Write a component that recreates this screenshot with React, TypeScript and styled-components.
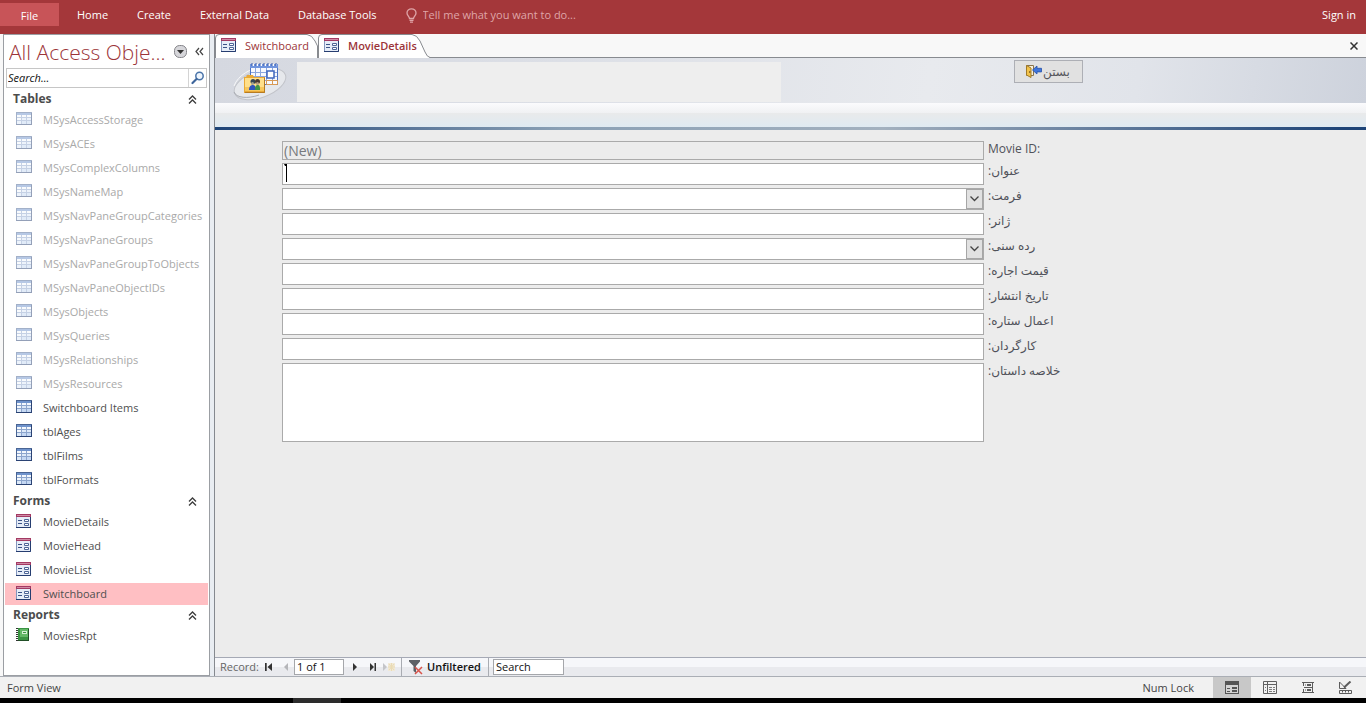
import React from 'react';
import styled, { createGlobalStyle } from 'styled-components';

const GlobalStyle = createGlobalStyle`
  * { box-sizing: border-box; }
  html, body, #root { height: 100%; }
  body {
    margin: 0;
    background: #000;
    color: #444;
    font-family: "Open Sans", "Noto Sans", "DejaVu Sans", sans-serif;
    font-size: 11px;
    line-height: 16px;
  }
  button, input, select, textarea { font: inherit; color: inherit; margin: 0; border-radius: 0; }
  button { cursor: default; }
  h1, h2, ul { margin: 0; padding: 0; font: inherit; }
  ul { list-style: none; }
`;

const Window = styled.div`
  display: flex;
  flex-direction: column;
  min-height: 100vh;
  background: #f8f8f8;
`;

/* ---- ribbon ---- */
const Ribbon = styled.header`
  display: flex;
  align-items: flex-start;
  height: 34px;
  padding: 3px 10px 0 0;
  background: #a4373a;
  color: #fff;
`;
const FileTab = styled.button`
  width: 59px;
  height: 23px;
  padding: 2px 0 0;
  border: 0;
  background: #c85458;
`;
const RibbonTabs = styled.nav`
  display: flex;
  gap: 29px;
  padding: 0 29px 0 18px;
`;
const RibbonTab = styled.button`
  height: 24px;
  padding: 0;
  border: 0;
  background: none;
  white-space: nowrap;
`;
const TellMe = styled.label`
  display: flex;
  flex: 1;
  align-items: center;
  gap: 6px;
  height: 24px;
  color: #dfa5a8;
`;
const TellMeInput = styled.input`
  width: 240px;
  padding: 0;
  border: 0;
  outline: 0;
  background: none;
  &::placeholder { color: #dfa5a8; opacity: 1; }
`;

/* ---- work area ---- */
const Workspace = styled.div`
  display: flex;
  flex: 1;
  border-bottom: 1px solid #aaaeb5;
`;

/* ---- navigation pane ---- */
const NavPane = styled.aside`
  width: 207px;
  margin-left: 3px;
  border: 1px solid #9b9ea3;
  background: #fff;
`;
const PaneHeader = styled.div`
  display: flex;
  align-items: center;
  gap: 8px;
  height: 33px;
  padding: 0 5px 0 5px;
`;
const PaneTitle = styled.h1`
  flex: 1;
  overflow: hidden;
  color: #9c3539;
  font-size: 21px;
  font-weight: 300;
  line-height: 32px;
  white-space: nowrap;
`;
const BareButton = styled.button`
  display: flex;
  align-items: center;
  justify-content: center;
  padding: 0;
  border: 0;
  background: none;
`;
const PaneSearch = styled.div`
  display: flex;
  height: 20px;
  margin: 0 2px 2px;
  border: 1px solid #c6c6c6;
`;
const PaneSearchInput = styled.input`
  flex: 1;
  min-width: 0;
  padding: 0 1px;
  border: 0;
  border-right: 1px solid #d4d4d4;
  outline: 0;
  &::placeholder { color: #111; font-style: italic; opacity: 1; }
`;
const SearchButton = styled(BareButton)` width: 17px; `;
const GroupHeader = styled.button`
  display: flex;
  align-items: center;
  justify-content: space-between;
  width: 100%;
  height: 18px;
  padding: 0 12px 0 9px;
  border: 0;
  background: none;
  color: #4c4c4c;
  font-size: 12px;
  font-weight: 700;
`;
const NavList = styled.ul`
  display: flex;
  flex-direction: column;
  gap: 2px;
  padding: 1px;
`;
const NavItem = styled.li<{ $dim?: boolean; $selected?: boolean }>`
  display: flex;
  align-items: center;
  gap: 11px;
  height: 22px;
  padding-left: 11px;
  color: ${p => (p.$dim ? '#a9a9a9' : '#4f4f4f')};
  background: ${p => (p.$selected ? '#ffbfc3' : 'none')};
  white-space: nowrap;
  svg { opacity: ${p => (p.$dim ? 0.5 : 1)}; }
`;
const Splitter = styled.div`
  width: 5px;
  border-right: 1px solid #85898f;
  background: #e9edf2;
`;

/* ---- document area ---- */
const Documents = styled.main`
  display: flex;
  flex: 1;
  flex-direction: column;
  min-width: 0;
  background: #ececec;
`;
const TabStrip = styled.div`
  display: flex;
  align-items: stretch;
  height: 24px;
  border-bottom: 1px solid #888b90;
  background: #f8f8f8;
`;
const DocTab = styled.button<{ $active?: boolean }>`
  position: relative;
  display: flex;
  align-items: center;
  gap: 8px;
  width: ${p => (p.$active ? 112 : 103)}px;
  height: ${p => (p.$active ? 24 : 23)}px;
  padding: 0 0 0 6px;
  border: 0;
  background: none;
  color: #9c3539;
  font-weight: ${p => (p.$active ? 600 : 400)};
  white-space: nowrap;
  > * { position: relative; }
`;
const TabShape = styled.svg`
  && { position: absolute; }
  left: 0;
  top: 0;
`;
const CloseDocument = styled(BareButton)`
  width: 24px;
  margin-left: auto;
`;

const FormHeader = styled.header`
  display: flex;
  height: 45px;
  padding: 1px 0 1px 16px;
  background: linear-gradient(100deg, #d5d8e0 0%, #dcdfe6 30%, #e8eaee 62%, #e1e4ea 80%, #cdd2dc 100%);
`;
const TitleBox = styled.div`
  flex: 0 1 484px;
  margin: 3px 0 0 10px;
  background: #eee;
`;
const CloseForm = styled.button`
  display: flex;
  align-items: center;
  gap: 1px;
  width: 69px;
  height: 23px;
  margin: 1px 0 0 233px;
  padding: 0 0 0 10px;
  border: 1px solid #adafb5;
  background: #e1e1e1;
  color: #54565c;
  font-size: 12px;
`;
const HeaderBand = styled.div`
  height: 24px;
  background: linear-gradient(#fbfbfd 0, #f0f1f3 10px, #e9eaeb 10px, #dfeaf2 24px);
`;
const HeaderRule = styled.div`
  height: 3px;
  background: linear-gradient(90deg, #1d4478, #8aa0b5 30%, #a3b1bf 58%, #1d4478 98%);
`;

const FormBody = styled.form`
  display: flex;
  flex: 1;
  flex-direction: column;
  gap: 3px;
  padding: 11px 0 12px 67px;
`;
const FieldRow = styled.div`
  display: grid;
  grid-template-columns: minmax(200px, 702px) minmax(120px, 1fr);
  column-gap: 4px;
`;
const FieldLabel = styled.label`
  justify-self: start;
  color: #50525a;
  font-size: 12px;
  line-height: 16px;
`;
const Field = styled.input`
  width: 100%;
  height: 22px;
  padding: 0 2px;
  border: 1px solid #aaa;
  outline: 0;
  background: #fff;
`;
const IdField = styled(Field)`
  height: 19px;
  padding: 0 1px;
  background: #ececec;
  color: #77797d;
  font-size: 14px;
`;
const Memo = styled.textarea`
  display: block;
  width: 100%;
  height: 79px;
  border: 1px solid #aaa;
  outline: 0;
  resize: none;
`;
const FieldCell = styled.div` position: relative; `;
const Caret = styled.svg`
  position: absolute;
  left: 2px;
  top: 1px;
`;
const Drop = styled.select`
  width: 100%;
  height: 22px;
  border: 1px solid #aaa;
  outline: 0;
  background: #fff;
  appearance: none;
`;
const DropArrow = styled.span`
  position: absolute;
  top: 1px;
  right: 1px;
  display: flex;
  align-items: center;
  justify-content: center;
  width: 17px;
  height: 20px;
  border: 1px solid #a6a6a6;
  background: #e1e1e1;
  pointer-events: none;
`;

const RecordBar = styled.footer`
  display: flex;
  align-items: center;
  height: 19px;
  padding-left: 5px;
  border-top: 1px solid #a5a9b5;
  background: linear-gradient(#f6f7fa 0 50%, #e9eaee 50%);
  color: #111;
`;
const RecordLabel = styled.label`
  width: 40px;
  color: #666;
`;
const RecordButton = styled(BareButton)<{ $width: number }>`
  width: ${p => p.$width}px;
  height: 16px;
`;
const RecordInput = styled.input<{ $width: number }>`
  width: ${p => p.$width}px;
  height: 16px;
  padding: 0 2px;
  border: 1px solid #a5a7ab;
  outline: 0;
  background: #fff;
`;
const FilterButton = styled(BareButton)`
  gap: 3px;
  width: 88px;
  height: 18px;
  margin: 0 4px 0 3px;
  border: 1px solid #a9acb2;
  border-width: 0 1px;
  font-weight: 600;
`;

/* ---- status bar ---- */
const StatusBar = styled.footer`
  display: flex;
  align-items: center;
  height: 21px;
  padding: 0 1px 0 7px;
  background: #f1f1f1;
`;
const StatusText = styled.span<{ $push?: boolean }>`
  margin-right: ${p => (p.$push ? 'auto' : '19px')};
`;
const ViewButton = styled(BareButton)<{ $active?: boolean }>`
  width: 38px;
  height: 21px;
  background: ${p => (p.$active ? '#c8c8c8' : 'none')};
`;
const Taskbar = styled.div`
  display: flex;
  height: 5px;
  padding-left: 293px;
  background: #000;
`;
const TaskbarItem = styled.div`
  width: 48px;
  background: #2c2c2c;
`;

/* ---- drawings ---- */
const TableIcon = () => (
  <svg width="16" height="16" viewBox="0 0 16 16">
    <rect width="16" height="13" fill="#8ca5cd" />
    <path fill="#4a6594" d="M0 0h16v1H0zM0 0h1v13H0z" />
    <rect x="1" y="1" width="14" height="2" fill="#6f93cc" />
    <path fill="#f4f8fd" d="M1 3h4v2H1zM6 3h4v2H6zM11 3h4v2h-4zM1 6h4v2H1z" />
    <path fill="#dde9f8" d="M6 6h4v2H6zM11 6h4v2h-4zM1 9h4v3H1z" />
    <path fill="#c5d8f3" d="M6 9h4v3H6zM11 9h4v3h-4z" />
    <path fill="#2b4374" d="M0 12h16v1H0zM15 1h1v12h-1z" />
  </svg>
);
const FormIcon = () => (
  <svg width="16" height="16" viewBox="0 0 16 16">
    <rect x=".5" y=".5" width="14" height="13" fill="#e6edf8" stroke="#8396bd" />
    <path fill="#a33a63" d="M0 0h15v3H0z" />
    <path fill="#d08aa5" d="M1 1h13v1H1z" />
    <path stroke="#3b5386" d="M2 6.500h4M2 9.500h4" />
    <path fill="#fff" stroke="#4d6596" d="M8.500 5.500h4v2h-4zM8.500 9.500h4v2h-4z" />
    <path fill="none" stroke="#263d70" d="M0 13.500h14.500V3" />
  </svg>
);
const ReportIcon = () => (
  <svg width="16" height="16" viewBox="0 0 16 16">
    <path fill="#3b9443" d="M2 0h11v12H2z" />
    <path fill="#63b866" d="M4 1h8v8H4z" />
    <path fill="#d7efd5" d="M6 3h5v3H6z" />
    <path fill="#3b9443" d="M7 4h3v1H7z" />
    <path fill="#214f27" d="M2 12h11v1H2zM12 1h1v12h-1z" />
    <path stroke="#333" strokeWidth="2" strokeDasharray="1 1" d="M1 0v13" />
  </svg>
);
const DoubleUp = () => (
  <svg width="9" height="9" viewBox="0 0 9 9" fill="none" stroke="#3c3c3c" strokeWidth="1.300">
    <path d="M1 4.500 4.500 1 8 4.500M1 8.500 4.500 5 8 8.500" />
  </svg>
);
const MenuCircle = () => (
  <svg width="13" height="13" viewBox="0 0 13 13">
    <rect x=".5" y=".5" width="12" height="12" rx="5" fill="#d6d6da" stroke="#85858a" />
    <path fill="#333" d="M3 5h7L6.500 9z" />
  </svg>
);
const Collapse = () => (
  <svg width="9" height="9" viewBox="0 0 9 9" fill="none" stroke="#444" strokeWidth="1.200">
    <path d="M4 1 1 4.500 4 8M8 1 5 4.500 8 8" />
  </svg>
);
const Magnifier = () => (
  <svg width="14" height="14" viewBox="0 0 14 14" fill="none">
    <circle cx="8.500" cy="5" r="3.700" fill="#eef5fd" stroke="#4a74a9" strokeWidth="1.500" />
    <path d="M5.500 8 1.500 12" stroke="#3d659b" strokeWidth="2.200" strokeLinecap="round" />
  </svg>
);
const Bulb = () => (
  <svg width="11" height="15" viewBox="0 0 11 15" fill="none" stroke="#dfa5a8" strokeWidth="1.300">
    <path d="M3.500 10.500c0-2-2.500-3-2.500-5.500a4.500 4.200 0 0 1 9 0c0 2.500-2.500 3.500-2.500 5.500zM3.500 12.300h4M4 14.200h3" />
  </svg>
);
const CrossIcon = () => (
  <svg width="8" height="8" viewBox="0 0 8 8" stroke="#333" strokeWidth="1.500">
    <path d="M.5.500l7 7M7.500.500l-7 7" />
  </svg>
);
const Emblem = () => (
  <svg width="56" height="43" viewBox="0 0 56 43">
    <ellipse cx="29" cy="25" rx="27" ry="13.500" transform="rotate(-20 29 25)" fill="#e6e8ec" stroke="#c2c4ca" />
    <path d="M3 27C7 16 20 9 33 7" fill="none" stroke="#f8f8f9" />
    <path d="M3 33c2 6 14 7 25 3" fill="none" stroke="#a8abb2" />
    <rect x="19.500" y="6.500" width="27" height="19" fill="#f7f9fe" stroke="#4d73c4" />
    <path fill="#6f94dd" d="M19 5h28v4H19z" />
    <path stroke="#fff" strokeWidth="2" strokeDasharray="2 2" d="M21 6h25" />
    <path stroke="#365bab" strokeDasharray="1 3" strokeWidth="3" d="M20.500 5.500h26" />
    <path stroke="#8ba6dd" d="M24.500 9v16M29.500 9v16M35.500 9v16M41.500 9v16M20 13.500h26M20 17.500h26M20 21.500h26" />
    <rect x="36" y="12" width="7" height="7" fill="#fff" stroke="#3f66bd" strokeWidth="1.500" />
    <path fill="none" stroke="#d89a55" d="M35.500 21.500h11v4h-11zM41.500 21v4" />
    <path fill="#e9a936" d="M13 18h2l1-2h6l1 2h11v16H13z" />
    <path fill="#ffdf8a" d="M14 19h19v10H14z" />
    <path fill="#f8c75b" d="M14 28h19v4H14z" />
    <path fill="none" stroke="#b67b23" d="M33.500 18.500V33.500H14" />
    <circle cx="22" cy="22.500" r="2.500" fill="#344656" />
    <circle cx="26.500" cy="22.500" r="2.500" fill="#4a3b34" />
    <circle cx="21.500" cy="24.500" r="1.500" fill="#a9a48f" />
    <circle cx="26.500" cy="24.500" r="1.500" fill="#b89f83" />
    <path fill="#2f54bd" d="M18 31c0-4 2-5 4-5s3 2 3 5z" />
    <path fill="#3e9348" d="M24 31c0-4 1-5 3-5s2 2 2 5z" />
  </svg>
);
const DoorIcon = () => (
  <svg width="17" height="15" viewBox="0 0 17 15">
    <path fill="#f7f0dc" stroke="#8a744b" d="M1.500 1.500h7v10h-7z" />
    <path fill="#f3c34b" stroke="#a17a26" d="M1.500 1.500 6 4v9.500l-4.500-2.500z" />
    <circle cx="4.700" cy="8" r=".8" fill="#5c4515" />
    <path fill="#3f76dc" stroke="#234fa8" strokeWidth=".8" d="M7.500 6 12 2v2.300h4.500v3.600H12V10z" />
  </svg>
);
const Chevron = () => (
  <svg width="9" height="6" viewBox="0 0 9 6" fill="none" stroke="#444" strokeWidth="1.300">
    <path d="M.5.500l4 4 4-4" />
  </svg>
);
const FirstIcon = () => (
  <svg width="8" height="8" viewBox="0 0 8 8" fill="#333"><path d="M0 0h1.700v8H0zM7 0v8L2.500 4z" /></svg>
);
const PrevIcon = () => (
  <svg width="8" height="8" viewBox="0 0 8 8" fill="#b5b6ba"><path d="M6 0v8L2 4z" /></svg>
);
const NextIcon = () => (
  <svg width="8" height="8" viewBox="0 0 8 8" fill="#333"><path d="M2 0v8l4-4z" /></svg>
);
const LastIcon = () => (
  <svg width="8" height="8" viewBox="0 0 8 8" fill="#333"><path d="M1 0v8l4-4zM5.500 0H7v8H5.500z" /></svg>
);
const NewIcon = () => (
  <svg width="14" height="10" viewBox="0 0 14 10">
    <path fill="#c4c5c9" d="M1 1v8l4-4z" />
    <path fill="#f1e9d6" d="M6 1h7v8H6z" />
    <path stroke="#eadbb5" d="M9.500 1v8M6 5h7M7 2l5 6M12 2 7 8" />
  </svg>
);
const FilterIcon = () => (
  <svg width="15" height="15" viewBox="0 0 15 15">
    <path fill="#5d6065" d="M0 0h11v1.500L7 6v7L4.500 11V6L0 1.500z" />
    <path stroke="#d9534a" strokeWidth="1.500" d="M6 7l7 7M13 7l-7 7" />
  </svg>
);
const FormViewIcon = () => (
  <svg width="15" height="14" viewBox="0 0 15 14">
    <rect x=".5" y=".5" width="13" height="12" fill="#d4d4d4" stroke="#555" />
    <path fill="#555" d="M0 0h14v4H0zM7 6h5v2H7zM7 9h5v2H7z" />
    <path stroke="#555" d="M2 7.500h3M2 10.500h3" />
  </svg>
);
const DatasheetIcon = () => (
  <svg width="15" height="14" viewBox="0 0 15 14" fill="none" stroke="#606060">
    <path d="M.5.500h13v12H.5zM.5 3.500h13M4.500.500v12" />
    <path d="M6 6.500h3M10 6.500h2M6 8.500h3M10 8.500h2M6 10.500h3M10 10.500h2M2 6.500h1M2 9.500h1" strokeWidth=".8" />
  </svg>
);
const LayoutIcon = () => (
  <svg width="14" height="14" viewBox="0 0 14 14" fill="none" stroke="#5c5c5c">
    <path d="M1 1.500h12M1 11.500h12M2.500 2v3M2.500 8v3M11.500 2v9M3 6.500h9" />
    <path d="M6 4h4M6 9h4" strokeWidth="1.800" />
    <path d="M4 4h1M4 9h1" />
  </svg>
);
const DesignIcon = () => (
  <svg width="16" height="14" viewBox="0 0 16 14" fill="none" stroke="#5c5c5c">
    <path d="M1.500 1v6.500H8zM1.500 9.500h12v3h-12zM4.500 10v1.500M7.500 10v1.500M10.500 10v1.500" />
    <path d="M6 6.500 12.500.500" strokeWidth="2" />
  </svg>
);

type Kind = 'table' | 'form' | 'report';
const icons: Record<Kind, React.FC> = { table: TableIcon, form: FormIcon, report: ReportIcon };

const groups: { title: string; kind: Kind; items: string[] }[] = [
  {
    title: 'Tables',
    kind: 'table',
    items: [
      'MSysAccessStorage', 'MSysACEs', 'MSysComplexColumns', 'MSysNameMap',
      'MSysNavPaneGroupCategories', 'MSysNavPaneGroups', 'MSysNavPaneGroupToObjects',
      'MSysNavPaneObjectIDs', 'MSysObjects', 'MSysQueries', 'MSysRelationships', 'MSysResources',
      'Switchboard Items', 'tblAges', 'tblFilms', 'tblFormats',
    ],
  },
  { title: 'Forms', kind: 'form', items: ['MovieDetails', 'MovieHead', 'MovieList', 'Switchboard'] },
  { title: 'Reports', kind: 'report', items: ['MoviesRpt'] },
];

const fields: { id: string; label: string; type?: 'id' | 'select' | 'memo'; focused?: boolean }[] = [
  { id: 'movieId', label: 'Movie ID:', type: 'id' },
  { id: 'title', label: 'عنوان:', focused: true },
  { id: 'format', label: 'فرمت:', type: 'select' },
  { id: 'genre', label: 'ژانر:' },
  { id: 'age', label: 'رده سنی:', type: 'select' },
  { id: 'price', label: 'قیمت اجاره:' },
  { id: 'release', label: 'تاریخ انتشار:' },
  { id: 'stars', label: 'اعمال ستاره:' },
  { id: 'director', label: 'کارگردان:' },
  { id: 'plot', label: 'خلاصه داستان:', type: 'memo' },
];

function Control({ id, type, focused }: { id: string; type?: string; focused?: boolean }) {
  if (type === 'id') return <IdField id={id} defaultValue="(New)" readOnly />;
  if (type === 'memo') return <Memo id={id} />;
  if (type === 'select') {
    return (
      <FieldCell>
        <Drop id={id}><option value="" /></Drop>
        <DropArrow><Chevron /></DropArrow>
      </FieldCell>
    );
  }
  return (
    <FieldCell>
      <Field id={id} />
      {focused && (
        <Caret width="4" height="18" viewBox="0 0 4 18">
          <path fill="#000" d="M2 0h1v18H2zM0 0h3v2H1z" />
        </Caret>
      )}
    </FieldCell>
  );
}

export default function App() {
  return (
    <>
      <GlobalStyle />
      <Window>
        <Ribbon>
          <FileTab>File</FileTab>
          <RibbonTabs>
            {['Home', 'Create', 'External Data', 'Database Tools'].map(t => <RibbonTab key={t}>{t}</RibbonTab>)}
          </RibbonTabs>
          <TellMe>
            <Bulb />
            <TellMeInput aria-label="Tell me" placeholder="Tell me what you want to do..." />
          </TellMe>
          <RibbonTab>Sign in</RibbonTab>
        </Ribbon>

        <Workspace>
          <NavPane>
            <PaneHeader>
              <PaneTitle>All Access Obje...</PaneTitle>
              <BareButton aria-label="Pane menu"><MenuCircle /></BareButton>
              <BareButton aria-label="Collapse pane"><Collapse /></BareButton>
            </PaneHeader>
            <PaneSearch>
              <PaneSearchInput aria-label="Search objects" placeholder="Search..." />
              <SearchButton aria-label="Search"><Magnifier /></SearchButton>
            </PaneSearch>
            {groups.map(g => {
              const Icon = icons[g.kind];
              return (
                <section key={g.title}>
                  <GroupHeader>{g.title}<DoubleUp /></GroupHeader>
                  <NavList>
                    {g.items.map(name => (
                      <NavItem key={name} $dim={name.startsWith('MSys')} $selected={name === 'Switchboard'}>
                        <Icon />{name}
                      </NavItem>
                    ))}
                  </NavList>
                </section>
              );
            })}
          </NavPane>
          <Splitter />

          <Documents>
            <TabStrip>
              <DocTab>
                <TabShape width="103" height="24" viewBox="0 0 103 24">
                  <path d="M.5 24V4Q.5.500 4 .5H92Q97 1 100 7L102.500 12V24" fill="#fff" stroke="#888b90" />
                </TabShape>
                <FormIcon /><span>Switchboard</span>
              </DocTab>
              <DocTab $active>
                <TabShape width="112" height="24" viewBox="0 0 112 24">
                  <path d="M.5 24V4Q.5.500 4 .5H94Q99 1 102 7L107 18Q109 23 112 23.500V24" fill="#fff" stroke="#888b90" />
                </TabShape>
                <FormIcon /><span>MovieDetails</span>
              </DocTab>
              <CloseDocument aria-label="Close document"><CrossIcon /></CloseDocument>
            </TabStrip>

            <FormHeader>
              <Emblem />
              <TitleBox />
              <CloseForm><DoorIcon /><span dir="rtl">بستن</span></CloseForm>
            </FormHeader>
            <HeaderBand />
            <HeaderRule />

            <FormBody onSubmit={e => e.preventDefault()}>
              {fields.map(f => (
                <FieldRow key={f.id}>
                  <Control id={f.id} type={f.type} focused={f.focused} />
                  <FieldLabel htmlFor={f.id} dir={f.type === 'id' ? 'ltr' : 'rtl'}>{f.label}</FieldLabel>
                </FieldRow>
              ))}
            </FormBody>

            <RecordBar>
              <RecordLabel htmlFor="record">Record:</RecordLabel>
              <RecordButton $width={18} aria-label="First record"><FirstIcon /></RecordButton>
              <RecordButton $width={16} aria-label="Previous record"><PrevIcon /></RecordButton>
              <RecordInput $width={50} id="record" defaultValue="1 of 1" />
              <RecordButton $width={21} aria-label="Next record"><NextIcon /></RecordButton>
              <RecordButton $width={15} aria-label="Last record"><LastIcon /></RecordButton>
              <RecordButton $width={18} aria-label="New record"><NewIcon /></RecordButton>
              <FilterButton><FilterIcon />Unfiltered</FilterButton>
              <RecordInput $width={71} aria-label="Search records" defaultValue="Search" />
            </RecordBar>
          </Documents>
        </Workspace>

        <StatusBar>
          <StatusText $push>Form View</StatusText>
          <StatusText>Num Lock</StatusText>
          <ViewButton $active aria-label="Form view"><FormViewIcon /></ViewButton>
          <ViewButton aria-label="Datasheet view"><DatasheetIcon /></ViewButton>
          <ViewButton aria-label="Layout view"><LayoutIcon /></ViewButton>
          <ViewButton aria-label="Design view"><DesignIcon /></ViewButton>
        </StatusBar>
        <Taskbar><TaskbarItem /></Taskbar>
      </Window>
    </>
  );
}
